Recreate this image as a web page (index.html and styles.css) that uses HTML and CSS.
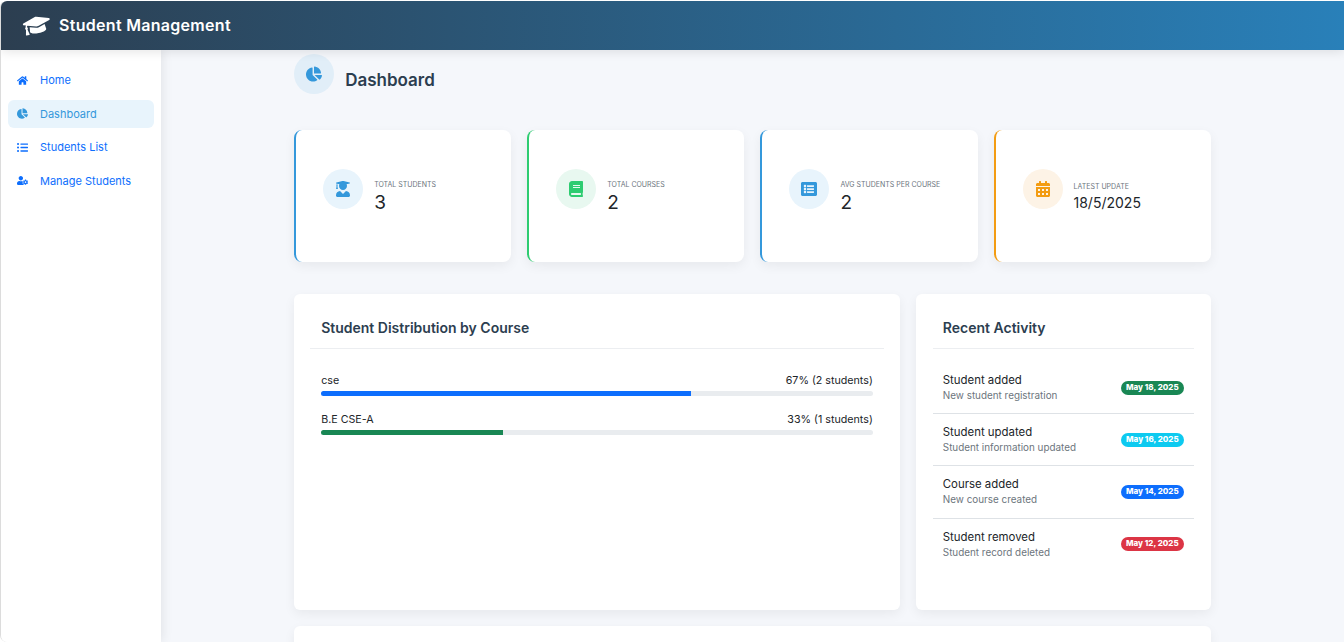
FILE: index.html
```html
<!DOCTYPE html>
<html>
<head>
    <title>Student Management</title>
    <link rel="stylesheet" href="styles.css">
</head>
<body>
    <div class="app">
        <header class="topbar">
            <svg class="brand-icon" viewBox="0 0 640 512"><path d="M622.34 153.2L343.4 67.5c-15.2-4.67-31.6-4.67-46.79 0L17.66 153.2c-23.54 7.23-23.54 38.36 0 45.59l48.63 14.94c-10.67 13.19-17.23 29.28-17.88 46.9C38.78 266.15 32 276.11 32 288c0 10.78 5.68 19.85 13.86 25.65L20.33 428.53C18.11 438.52 25.71 448 35.94 448h56.11c10.24 0 17.84-9.48 15.62-19.47L82.14 313.65C90.32 307.85 96 298.78 96 288c0-11.57-6.47-21.25-15.66-26.87.76-15.02 8.44-28.3 20.69-36.72L296.6 285.5c9.06 2.78 26.44 6.25 46.79 0l278.95-85.7c23.55-7.24 23.55-38.36 0-45.6zM352.79 315.09c-28.53 8.76-52.84 3.92-65.59 0l-145.02-44.55L128 384c0 35.35 85.96 64 192 64s192-28.65 192-64l-14.18-113.47-145.03 44.56z"/></svg>
            <span class="brand-name">Student Management</span>
        </header>

        <div class="layout">
            <nav class="sidebar">
                <a class="nav-link">
                    <svg class="nav-icon" viewBox="0 0 576 512"><path d="M280.37 148.26L96 300.11V464a16 16 0 0 0 16 16l112.06-.29a16 16 0 0 0 15.92-16V368a16 16 0 0 1 16-16h64a16 16 0 0 1 16 16v95.64a16 16 0 0 0 16 16.05L464 480a16 16 0 0 0 16-16V300L295.67 148.26a12.19 12.19 0 0 0-15.3 0zM571.6 251.47L488 182.56V44.05a12 12 0 0 0-12-12h-56a12 12 0 0 0-12 12v72.61L318.47 43a48 48 0 0 0-61 0L4.34 251.47a12 12 0 0 0-1.6 16.9l25.5 31A12 12 0 0 0 45.15 301l235.22-193.74a12.19 12.19 0 0 1 15.3 0L530.9 301a12 12 0 0 0 16.9-1.6l25.5-31a12 12 0 0 0-1.7-16.93z"/></svg>
                    Home
                </a>
                <a class="nav-link active">
                    <svg class="nav-icon" viewBox="0 0 544 512"><path d="M527.79 288H290.5l158.03 158.03c6.04 6.04 15.98 6.53 22.19.68 38.7-36.46 65.32-85.61 73.13-140.86 1.34-9.46-6.51-17.85-16.06-17.85zm-15.83-64.8C503.72 103.74 408.26 8.28 288.8.04 279.68-.59 272 7.1 272 16.24V240h223.77c9.14 0 16.82-7.68 16.19-16.8zM224 288V50.71c0-9.55-8.39-17.4-17.84-16.06C86.99 51.49-4.1 155.6.14 280.37 4.5 408.51 114.83 513.59 243.03 511.98c50.4-.63 96.97-16.87 135.26-44.03 7.9-5.6 8.42-17.23 1.57-24.08L224 288z"/></svg>
                    Dashboard
                </a>
                <a class="nav-link">
                    <svg class="nav-icon" viewBox="0 0 512 512"><path d="M48 48a48 48 0 1 0 48 48 48 48 0 0 0-48-48zm0 160a48 48 0 1 0 48 48 48 48 0 0 0-48-48zm0 160a48 48 0 1 0 48 48 48 48 0 0 0-48-48zm448 16H176a16 16 0 0 0-16 16v32a16 16 0 0 0 16 16h320a16 16 0 0 0 16-16v-32a16 16 0 0 0-16-16zm0-320H176a16 16 0 0 0-16 16v32a16 16 0 0 0 16 16h320a16 16 0 0 0 16-16V80a16 16 0 0 0-16-16zm0 160H176a16 16 0 0 0-16 16v32a16 16 0 0 0 16 16h320a16 16 0 0 0 16-16v-32a16 16 0 0 0-16-16z"/></svg>
                    Students List
                </a>
                <a class="nav-link">
                    <svg class="nav-icon" viewBox="0 0 640 512"><path d="M610.5 373.3c2.6-14.1 2.6-28.5 0-42.6l25.8-14.9c3-1.7 4.3-5.2 3.3-8.5-6.7-21.6-18.2-41.2-33.2-57.4-2.3-2.5-6-3.1-9-1.4l-25.8 14.9c-10.9-9.3-23.4-16.5-36.9-21.3v-29.8c0-3.4-2.4-6.4-5.7-7.1-22.3-5-45-4.8-66.2 0-3.3.7-5.7 3.7-5.7 7.1v29.8c-13.5 4.8-26 12-36.9 21.3l-25.8-14.9c-2.9-1.7-6.7-1.1-9 1.4-15 16.2-26.5 35.8-33.2 57.4-1 3.3.4 6.8 3.3 8.5l25.8 14.9c-2.6 14.1-2.6 28.5 0 42.6l-25.8 14.9c-3 1.7-4.3 5.2-3.3 8.5 6.7 21.6 18.2 41.1 33.2 57.4 2.3 2.5 6 3.1 9 1.4l25.8-14.9c10.9 9.3 23.4 16.5 36.9 21.3v29.8c0 3.4 2.4 6.4 5.7 7.1 22.3 5 45 4.8 66.2 0 3.3-.7 5.7-3.7 5.7-7.1v-29.8c13.5-4.8 26-12 36.9-21.3l25.8 14.9c2.9 1.7 6.7 1.1 9-1.4 15-16.2 26.5-35.8 33.2-57.4 1-3.3-.4-6.8-3.3-8.5l-25.8-14.9zM496 400.5c-26.8 0-48.5-21.8-48.5-48.5s21.8-48.5 48.5-48.5 48.5 21.8 48.5 48.5-21.7 48.5-48.5 48.5zM224 256c70.7 0 128-57.3 128-128S294.7 0 224 0 96 57.3 96 128s57.3 128 128 128zm201.2 226.5c-2.3-1.2-4.6-2.6-6.8-3.9l-7.9 4.6c-6 3.4-12.8 5.3-19.6 5.3-10.9 0-21.4-4.6-28.9-12.6-18.3-19.8-32.3-43.9-40.2-69.6-5.5-17.7 1.9-36.4 17.9-45.7l7.9-4.6c-.1-2.6-.1-5.2 0-7.8l-7.9-4.6c-16-9.2-23.4-28-17.9-45.7.9-2.9 2.2-5.8 3.2-8.7-3.8-.3-7.5-1.2-11.4-1.2h-16.7c-22.2 10.2-46.9 16-72.9 16s-50.6-5.8-72.9-16h-16.7C60.2 288 0 348.2 0 422.4V464c0 26.5 21.5 48 48 48h352c10.1 0 19.5-3.2 27.2-8.5-1.2-3.8-2-7.7-2-11.8v-9.2z"/></svg>
                    Manage Students
                </a>
            </nav>

            <main class="content">
                <div class="page-title">
                    <span class="title-circle">
                        <svg class="title-icon" viewBox="0 0 544 512"><path d="M527.79 288H290.5l158.03 158.03c6.04 6.04 15.98 6.53 22.19.68 38.7-36.46 65.32-85.61 73.13-140.86 1.34-9.46-6.51-17.85-16.06-17.85zm-15.83-64.8C503.72 103.74 408.26 8.28 288.8.04 279.68-.59 272 7.1 272 16.24V240h223.77c9.14 0 16.82-7.68 16.19-16.8zM224 288V50.71c0-9.55-8.39-17.4-17.84-16.06C86.99 51.49-4.1 155.6.14 280.37 4.5 408.51 114.83 513.59 243.03 511.98c50.4-.63 96.97-16.87 135.26-44.03 7.9-5.6 8.42-17.23 1.57-24.08L224 288z"/></svg>
                    </span>
                    <h1>Dashboard</h1>
                </div>

                <section class="stats">
                    <div class="stat-card blue">
                        <span class="stat-circle">
                            <svg class="stat-icon" viewBox="0 0 448 512"><path d="M319.4 320.6L224 416l-95.4-95.4C57.1 323.7 0 382.2 0 454.4v9.6c0 26.5 21.5 48 48 48h352c26.5 0 48-21.5 48-48v-9.6c0-72.2-57.1-130.7-128.6-133.8zM13.6 79.8l6.4 1.5v58.4c-7 4.2-12 11.5-12 20.3 0 8.4 4.6 15.4 11.1 19.7L3.5 242c-1.7 6.9 2.1 14 7.6 14h41.8c5.5 0 9.3-7.1 7.6-14l-15.6-62.3C51.4 175.4 56 168.4 56 160c0-8.8-5-16.1-12-20.3V87.1l66 15.9c-8.6 17.2-14 36.4-14 57 0 70.7 57.3 128 128 128s128-57.3 128-128c0-20.6-5.3-39.8-14-57l96.3-23.2c18.2-4.4 18.2-27.1 0-31.5l-190.4-46c-13-3.1-26.7-3.1-39.7 0L13.6 48.2c-18.1 4.4-18.1 27.2 0 31.6z"/></svg>
                        </span>
                        <div class="stat-text">
                            <div class="stat-label">TOTAL STUDENTS</div>
                            <div class="stat-value">3</div>
                        </div>
                    </div>
                    <div class="stat-card green">
                        <span class="stat-circle">
                            <svg class="stat-icon" viewBox="0 0 448 512"><path d="M448 360V24c0-13.3-10.7-24-24-24H96C43 0 0 43 0 96v320c0 53 43 96 96 96h328c13.3 0 24-10.7 24-24v-16c0-7.5-3.5-14.3-8.9-18.7-4.2-15.4-4.2-59.3 0-74.7 5.4-4.3 8.9-11.1 8.9-18.6zM128 134c0-3.3 2.7-6 6-6h212c3.3 0 6 2.7 6 6v20c0 3.3-2.7 6-6 6H134c-3.3 0-6-2.7-6-6v-20zm0 64c0-3.3 2.7-6 6-6h212c3.3 0 6 2.7 6 6v20c0 3.3-2.7 6-6 6H134c-3.3 0-6-2.7-6-6v-20zm253.4 250H96c-17.7 0-32-14.3-32-32 0-17.6 14.4-32 32-32h285.4c-1.9 17.1-1.9 46.9 0 64z"/></svg>
                        </span>
                        <div class="stat-text">
                            <div class="stat-label">TOTAL COURSES</div>
                            <div class="stat-value">2</div>
                        </div>
                    </div>
                    <div class="stat-card blue">
                        <span class="stat-circle">
                            <svg class="stat-icon" viewBox="0 0 512 512"><path d="M464 480H48c-26.51 0-48-21.49-48-48V80c0-26.51 21.49-48 48-48h416c26.51 0 48 21.49 48 48v352c0 26.51-21.49 48-48 48zM128 120c-22.091 0-40 17.909-40 40s17.909 40 40 40 40-17.909 40-40-17.909-40-40-40zm0 96c-22.091 0-40 17.909-40 40s17.909 40 40 40 40-17.909 40-40-17.909-40-40-40zm0 96c-22.091 0-40 17.909-40 40s17.909 40 40 40 40-17.909 40-40-17.909-40-40-40zm288-136v-32c0-6.627-5.373-12-12-12H204c-6.627 0-12 5.373-12 12v32c0 6.627 5.373 12 12 12h200c6.627 0 12-5.373 12-12zm0 96v-32c0-6.627-5.373-12-12-12H204c-6.627 0-12 5.373-12 12v32c0 6.627 5.373 12 12 12h200c6.627 0 12-5.373 12-12zm0 96v-32c0-6.627-5.373-12-12-12H204c-6.627 0-12 5.373-12 12v32c0 6.627 5.373 12 12 12h200c6.627 0 12-5.373 12-12z"/></svg>
                        </span>
                        <div class="stat-text">
                            <div class="stat-label">AVG STUDENTS PER COURSE</div>
                            <div class="stat-value">2</div>
                        </div>
                    </div>
                    <div class="stat-card orange">
                        <span class="stat-circle">
                            <svg class="stat-icon" viewBox="0 0 448 512"><path d="M0 464c0 26.5 21.5 48 48 48h352c26.5 0 48-21.5 48-48V192H0v272zm320-196c0-6.6 5.4-12 12-12h40c6.6 0 12 5.4 12 12v40c0 6.6-5.4 12-12 12h-40c-6.6 0-12-5.4-12-12v-40zm0 128c0-6.6 5.4-12 12-12h40c6.6 0 12 5.4 12 12v40c0 6.6-5.4 12-12 12h-40c-6.6 0-12-5.4-12-12v-40zM192 268c0-6.6 5.4-12 12-12h40c6.6 0 12 5.4 12 12v40c0 6.6-5.4 12-12 12h-40c-6.6 0-12-5.4-12-12v-40zm0 128c0-6.6 5.4-12 12-12h40c6.6 0 12 5.4 12 12v40c0 6.6-5.4 12-12 12h-40c-6.6 0-12-5.4-12-12v-40zM64 268c0-6.6 5.4-12 12-12h40c6.6 0 12 5.4 12 12v40c0 6.6-5.4 12-12 12H76c-6.6 0-12-5.4-12-12v-40zm0 128c0-6.6 5.4-12 12-12h40c6.6 0 12 5.4 12 12v40c0 6.6-5.4 12-12 12H76c-6.6 0-12-5.4-12-12v-40zM400 64h-48V16c0-8.8-7.2-16-16-16h-32c-8.8 0-16 7.2-16 16v48H160V16c0-8.8-7.2-16-16-16h-32c-8.8 0-16 7.2-16 16v48H48C21.5 64 0 85.5 0 112v48h448v-48c0-26.5-21.5-48-48-48z"/></svg>
                        </span>
                        <div class="stat-text compact">
                            <div class="stat-label">LATEST UPDATE</div>
                            <div class="stat-value small">18/5/2025</div>
                        </div>
                    </div>
                </section>

                <section class="panels">
                    <div class="panel panel-wide">
                        <h2 class="panel-title">Student Distribution by Course</h2>
                        <div class="course-list">
                            <div class="course">
                                <div class="course-row"><span>cse</span><span>67% (2 students)</span></div>
                                <div class="track"><div class="fill fill-blue" style="width: 67%"></div></div>
                            </div>
                            <div class="course">
                                <div class="course-row"><span>B.E CSE-A</span><span>33% (1 students)</span></div>
                                <div class="track"><div class="fill fill-green" style="width: 33%"></div></div>
                            </div>
                        </div>
                    </div>

                    <div class="panel panel-narrow">
                        <h2 class="panel-title">Recent Activity</h2>
                        <ul class="activity">
                            <li>
                                <div><div class="activity-name">Student added</div><div class="activity-note">New student registration</div></div>
                                <span class="badge bg-green">May 18, 2025</span>
                            </li>
                            <li>
                                <div><div class="activity-name">Student updated</div><div class="activity-note">Student information updated</div></div>
                                <span class="badge bg-cyan">May 16, 2025</span>
                            </li>
                            <li>
                                <div><div class="activity-name">Course added</div><div class="activity-note">New course created</div></div>
                                <span class="badge bg-blue">May 14, 2025</span>
                            </li>
                            <li>
                                <div><div class="activity-name">Student removed</div><div class="activity-note">Student record deleted</div></div>
                                <span class="badge bg-red">May 12, 2025</span>
                            </li>
                        </ul>
                    </div>
                </section>

                <section class="panel panel-next"></section>
            </main>
        </div>
    </div>
</body>
</html>
```

FILE: styles.css
```css
html, body {
    margin: 0;
    height: 100%;
    overflow: hidden;
}

body {
    font-family: 'Inter', 'Noto Sans', Arial, sans-serif;
    background-color: #ffffff;
    color: #212529;
}

.app {
    height: 642px;
    box-sizing: border-box;
    border-top: 1px solid #ffffff;
    border-left: 1px solid #dcdcdc;
    border-radius: 7px 0 0 7px;
    display: flex;
    flex-direction: column;
    overflow: hidden;
}

.topbar {
    height: 49px;
    flex-shrink: 0;
    box-sizing: border-box;
    display: flex;
    align-items: center;
    padding: 0 0 1px 22px;
    background: linear-gradient(90deg, #2c3e50, #2980b9);
    box-shadow: 0 2px 10px rgba(0, 0, 0, 0.1);
    color: #ffffff;
    position: relative;
    z-index: 2;
}

.brand-icon {
    width: 28px;
    height: 22px;
    fill: #ffffff;
    margin-right: 8px;
    transform: rotate(-12deg);
}

.brand-name {
    font-size: 16px;
    font-weight: 600;
    letter-spacing: 0.3px;
}

.layout {
    flex: 1;
    display: flex;
    min-height: 0;
}

.sidebar {
    width: 159.8px;
    flex-shrink: 0;
    box-sizing: border-box;
    padding: 16.8px 7px 0;
    background-color: #ffffff;
    box-shadow: 2px 0 10px rgba(0, 0, 0, 0.08);
    display: flex;
    flex-direction: column;
    gap: 6px;
    position: relative;
    z-index: 1;
}

.nav-link {
    height: 27.5px;
    box-sizing: border-box;
    display: flex;
    align-items: center;
    padding: 0 0 1px 9px;
    border-radius: 6px;
    font-size: 11px;
    color: #0d6efd;
}

.nav-link.active {
    background-color: #e8f4fc;
    color: #3498db;
}

.nav-icon {
    width: 11px;
    height: 11px;
    fill: currentColor;
    margin-right: 12px;
}

.content {
    flex: 1;
    min-width: 0;
    background-color: #f5f7fb;
    padding-top: 4px;
}

.content > * {
    width: 916.5px;
    margin-left: auto;
    margin-right: auto;
}

.page-title {
    display: flex;
    align-items: center;
    gap: 11px;
    height: 40px;
}

.title-circle {
    width: 40px;
    height: 40px;
    border-radius: 50%;
    background-color: #e1eef8;
    display: flex;
    align-items: center;
    justify-content: center;
}

.title-icon {
    width: 16px;
    height: 16px;
    fill: #3498db;
}

h1 {
    margin: 12px 0 0;
    font-size: 17px;
    font-weight: 600;
    color: #2c3e50;
}

.stats {
    display: grid;
    grid-template-columns: repeat(4, 1fr);
    gap: 16px;
    margin-top: 36px;
}

.stat-card {
    height: 132px;
    box-sizing: border-box;
    display: flex;
    align-items: flex-start;
    gap: 11px;
    padding: 39px 0 0 27px;
    background-color: #ffffff;
    border-left: 2px solid #3498db;
    border-radius: 8px;
    box-shadow: 0 4px 12px rgba(0, 0, 0, 0.06);
}

.stat-card.green { border-left-color: #2ecc71; }
.stat-card.orange { border-left-color: #f39c12; }

.stat-circle {
    width: 40px;
    height: 40px;
    flex-shrink: 0;
    border-radius: 50%;
    background-color: #e8f4fc;
    color: #3498db;
    display: flex;
    align-items: center;
    justify-content: center;
}

.green .stat-circle {
    background-color: #e8f8f0;
    color: #2ecc71;
}

.orange .stat-circle {
    background-color: #fdf3e6;
    color: #f39c12;
}

.stat-icon {
    width: 16px;
    height: 16px;
    fill: currentColor;
}

.stat-text {
    padding-top: 11px;
}

.stat-text.compact {
    padding-top: 13px;
}

.stat-label {
    font-size: 7px;
    line-height: 10px;
    color: #6c757d;
}

.stat-value {
    font-size: 19px;
    line-height: 24px;
    margin-top: 1px;
}

.stat-value.small {
    font-size: 14px;
    line-height: 20px;
}

.panels {
    display: flex;
    gap: 16px;
    margin-top: 32px;
}

.panel {
    box-sizing: border-box;
    background-color: #ffffff;
    border-radius: 6px;
    box-shadow: 0 4px 12px rgba(0, 0, 0, 0.06);
}

.panel-wide {
    width: 606px;
    height: 316px;
    padding: 0 16px;
}

.panel-narrow {
    width: 295px;
    height: 316px;
    padding: 0 17px;
}

.panel-next {
    height: 100px;
    margin-top: 16px;
}

.panel-title {
    margin: 0;
    height: 55px;
    box-sizing: border-box;
    padding: 25px 0 0 11px;
    font-size: 14px;
    line-height: 18px;
    font-weight: 600;
    color: #2c3e50;
    border-bottom: 1px solid #eceef1;
}

.panel-narrow .panel-title {
    padding-left: 10px;
}

.course-list {
    padding: 25px 11px 0;
}

.course {
    margin-bottom: 17px;
}

.course-row {
    display: flex;
    justify-content: space-between;
    font-size: 10.7px;
    line-height: 13px;
    margin-bottom: 4px;
}

.track {
    height: 5px;
    border-radius: 3px;
    background-color: #e9ecef;
    overflow: hidden;
}

.fill {
    height: 100%;
}

.fill-blue { background-color: #0d6efd; }
.fill-green { background-color: #198754; }

.activity {
    list-style-type: none;
    margin: 0;
    padding: 13px 0 0;
}

.activity li {
    height: 52.2px;
    box-sizing: border-box;
    padding: 0 10px;
    display: flex;
    align-items: center;
    justify-content: space-between;
    border-bottom: 1px solid #dee2e6;
}

.activity li:last-child {
    border-bottom-color: transparent;
}

.activity-name {
    font-size: 11.4px;
    line-height: 15px;
}

.activity-note {
    font-size: 9.9px;
    line-height: 14px;
    color: #6c757d;
}

.badge {
    padding: 0 5px;
    height: 14px;
    line-height: 13px;
    border-radius: 7px;
    font-size: 8px;
    font-weight: 800;
    color: #ffffff;
}

.bg-green { background-color: #198754; }
.bg-cyan { background-color: #0dcaf0; }
.bg-blue { background-color: #0d6efd; }
.bg-red { background-color: #dc3545; }
```
